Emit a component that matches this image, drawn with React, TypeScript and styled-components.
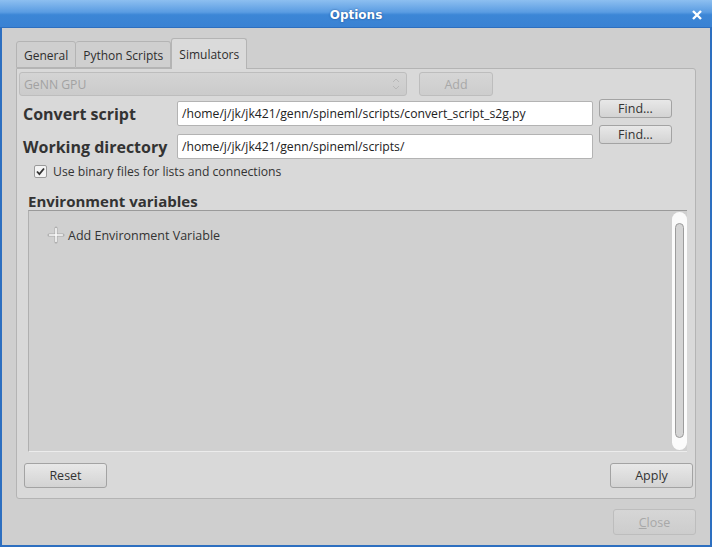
import React from "react";
import styled, { createGlobalStyle } from "styled-components";

const Global = createGlobalStyle`
  html, body { margin: 0; padding: 0; background: #cfcfcf; }
  body { font-family: "Open Sans", "Noto Sans", sans-serif; }
`;

const Window = styled.div`
  width: 712px;
  height: 547px;
  box-sizing: border-box;
  display: flex;
  flex-direction: column;
  background: #cfcfcf;
  border: 2px solid #2d6fc0;
  border-top: none;
`;

const TitleBar = styled.div`
  height: 28px;
  margin: 0 -2px;
  padding-top: 3px;
  position: relative;
  display: flex;
  align-items: center;
  justify-content: center;
  background: linear-gradient(#8dbff0 0%, #5a9ce2 45%, #3c86d6 55%, #3a82d3 100%);
  border-bottom: 1px solid #2e6fbf;
  box-sizing: border-box;
  color: #fff;
  font-family: "DejaVu Sans", sans-serif;
  font-weight: bold;
  font-size: 12px;
  text-shadow: 0 0 2px rgba(0, 40, 100, 0.6);
`;

const CloseX = styled.svg`
  position: absolute;
  right: 10px;
  top: 10px;
`;

const Body = styled.div`
  flex: 1;
  display: flex;
  flex-direction: column;
  padding: 10px 14px 10px 14px;
`;

const TabBar = styled.div`
  display: flex;
  align-items: flex-end;
  height: 30px;
  position: relative;
  z-index: 1;
`;

const Tab = styled.div<{ $active?: boolean; $first?: boolean }>`
  box-sizing: border-box;
  height: ${(p) => (p.$active ? "31px" : "27px")};
  margin-bottom: ${(p) => (p.$active ? "-1px" : "0")};
  padding: 0 7px;
  display: flex;
  align-items: center;
  font-size: 12px;
  color: #2e2e2e;
  background: ${(p) => (p.$active ? "#dadada" : "#cfcfcf")};
  border: 1px solid #b4b4b4;
  border-bottom: ${(p) => (p.$active ? "none" : "1px solid #b4b4b4")};
  border-left: ${(p) => (p.$first || p.$active ? "1px solid #b4b4b4" : "none")};
  border-radius: 3px 3px 0 0;
  padding-top: ${(p) => (p.$active ? "0" : "1px")};
`;

const Pane = styled.div`
  flex: 1;
  background: #d9d9d9;
  border: 1px solid #b4b4b4;
  border-radius: 0 3px 3px 3px;
  display: flex;
  flex-direction: column;
  padding: 3px 2px 10px 2px;
`;

const TopRow = styled.div`
  display: flex;
  gap: 12px;
  height: 24px;
`;

const Combo = styled.div`
  width: 388px;
  box-sizing: border-box;
  border: 1px solid #bdbdbd;
  border-radius: 3px;
  background: linear-gradient(#d4d4d4, #cbcbcb);
  color: #a2a2a2;
  font-size: 12.2px;
  display: flex;
  align-items: center;
  justify-content: space-between;
  padding: 0 6px 0 4px;
`;

const Button = styled.div<{ $w: number; $h?: number; $disabled?: boolean }>`
  width: ${(p) => p.$w}px;
  height: ${(p) => p.$h ?? 25}px;
  box-sizing: border-box;
  border: 1px solid ${(p) => (p.$disabled ? "#bdbdbd" : "#a3a3a3")};
  border-radius: 3px;
  background: ${(p) =>
    p.$disabled ? "linear-gradient(#d6d6d6, #cdcdcd)" : "linear-gradient(#e8e8e8, #d3d3d3)"};
  color: ${(p) => (p.$disabled ? "#a8a8a8" : "#333")};
  font-size: 12.5px;
  display: flex;
  align-items: center;
  justify-content: center;
  flex-shrink: 0;
`;

const FieldArea = styled.div`
  display: flex;
  margin-top: 4px;
  margin-left: 4px;
`;

const Fields = styled.div`
  display: flex;
  flex-direction: column;
  gap: 8px;
  padding-top: 1px;
`;

const FieldRow = styled.div`
  display: flex;
  align-items: center;
`;

const Label = styled.div`
  width: 154px;
  font-weight: bold;
  font-size: 16px;
  color: #333;
  white-space: nowrap;
`;

const Input = styled.div`
  width: 416px;
  height: 25px;
  box-sizing: border-box;
  background: #fff;
  border: 1px solid #b3b3b3;
  border-radius: 2px;
  padding: 0 4px;
  font-size: 12.2px;
  color: #222;
  display: flex;
  align-items: center;
`;

const FindCol = styled.div`
  display: flex;
  flex-direction: column;
  gap: 7px;
  margin: -1px 0 0 6px;
`;

const CheckRow = styled.div`
  display: flex;
  align-items: center;
  gap: 6px;
  margin: 4px 0 0 15px;
  font-size: 12.2px;
  color: #333;
`;

const Section = styled.div`
  margin: 13px 6px 0 9px;
  flex: 1;
  display: flex;
  flex-direction: column;
`;

const SectionTitle = styled.div`
  font-weight: bold;
  font-size: 15px;
  color: #333;
  line-height: 18px;
  margin-top: -1px;
`;

const List = styled.div`
  height: 242px;
  box-sizing: border-box;
  background: #d0d0d0;
  border-top: 1px solid #9a9a9a;
  border-left: 1px solid #b0b0b0;
  border-bottom: 1px solid #ececec;
  position: relative;
  padding: 15px 0 0 18px;
`;

const AddItem = styled.div`
  display: flex;
  align-items: center;
  gap: 3px;
  font-size: 12.5px;
  color: #333;
`;

const Scroll = styled.div`
  position: absolute;
  right: 0;
  top: 1px;
  bottom: 1px;
  width: 15px;
  background: #fbfbfb;
  border-radius: 8px;
  box-sizing: border-box;
  padding: 11px 3px 12px 3px;
  display: flex;
`;

const Handle = styled.div`
  flex: 1;
  border: 1px solid #9c9c9c;
  border-radius: 5px;
  background: #d4d4d4;
`;

const BottomRow = styled.div`
  display: flex;
  justify-content: space-between;
  margin: 11px 0 0 5px;
`;

const Footer = styled.div`
  display: flex;
  justify-content: flex-end;
  margin-top: 10px;
`;

const Plus = () => (
  <svg width="18" height="18" viewBox="0 0 18 18">
    <path d="M9 2v14M2 9h14" stroke="#a9a9a9" strokeWidth="3" strokeLinecap="round" />
    <path d="M9 2.5v13M2.5 9h13" stroke="#fafafa" strokeWidth="1.6" strokeLinecap="round" />
  </svg>
);

const Check = () => (
  <svg width="13" height="13" viewBox="0 0 13 13">
    <rect x="0.5" y="0.5" width="12" height="12" rx="1.5" fill="#f4f4f4" stroke="#9a9a9a" />
    <path d="M3 6.5l2.4 2.6L10 3.5" fill="none" stroke="#333" strokeWidth="1.8" />
  </svg>
);

const Spinner = () => (
  <svg width="8" height="16" viewBox="0 0 8 16">
    <path d="M1 6l3-3 3 3" fill="none" stroke="#b8b8b8" strokeWidth="1" />
    <path d="M1 10l3 3 3-3" fill="none" stroke="#b8b8b8" strokeWidth="1" />
  </svg>
);

export default function App() {
  return (
    <>
      <Global />
      <Window>
        <TitleBar>
          Options
          <CloseX width="10" height="10" viewBox="0 0 10 10">
            <path d="M1 1l8 8M9 1l-8 8" stroke="#fff" strokeWidth="2.4" />
          </CloseX>
        </TitleBar>
        <Body>
          <TabBar>
            <Tab $first>General</Tab>
            <Tab>Python Scripts</Tab>
            <Tab $active>Simulators</Tab>
          </TabBar>
          <Pane>
            <TopRow>
              <Combo>
                GeNN GPU
                <Spinner />
              </Combo>
              <Button $w={74} $h={24} $disabled>
                Add
              </Button>
            </TopRow>
            <FieldArea>
              <Fields>
                <FieldRow>
                  <Label>Convert script</Label>
                  <Input>/home/j/jk/jk421/genn/spineml/scripts/convert_script_s2g.py</Input>
                </FieldRow>
                <FieldRow>
                  <Label>Working directory</Label>
                  <Input>/home/j/jk/jk421/genn/spineml/scripts/</Input>
                </FieldRow>
              </Fields>
              <FindCol>
                <Button $w={73} $h={19}>Find...</Button>
                <Button $w={73} $h={19}>Find...</Button>
              </FindCol>
            </FieldArea>
            <CheckRow>
              <Check />
              Use binary files for lists and connections
            </CheckRow>
            <Section>
              <SectionTitle>Environment variables</SectionTitle>
              <List>
                <AddItem>
                  <Plus />
                  Add Environment Variable
                </AddItem>
                <Scroll>
                  <Handle />
                </Scroll>
              </List>
            </Section>
            <BottomRow>
              <Button $w={83} $h={25}>Reset</Button>
              <Button $w={83} $h={25}>Apply</Button>
            </BottomRow>
          </Pane>
          <Footer>
            <Button $w={83} $h={26} $disabled>
              <span>
                <u>C</u>lose
              </span>
            </Button>
          </Footer>
        </Body>
      </Window>
    </>
  );
}
